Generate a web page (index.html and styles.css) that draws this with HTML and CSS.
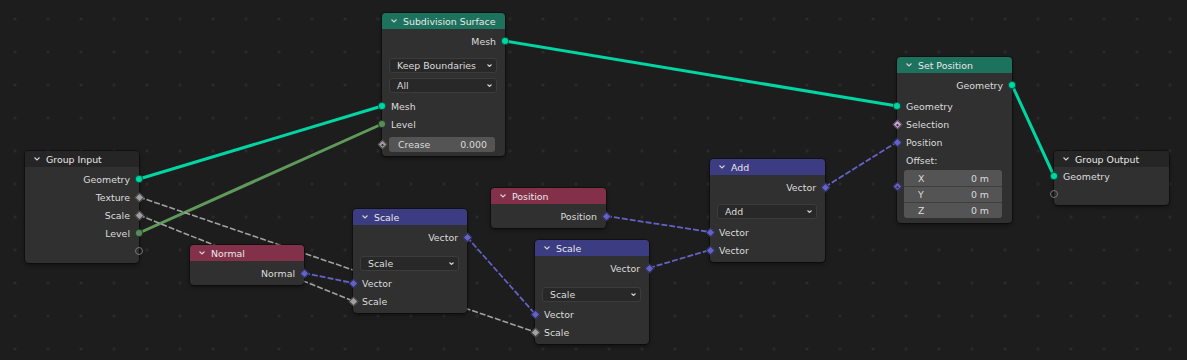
FILE: index.html
```html
<!DOCTYPE html>
<html lang="en">
  <head>
    <meta charset="UTF-8" />
    <title>Geometry Nodes</title>
    <link rel="stylesheet" href="styles.css">
  </head>
  <body>
    <div class="editor">
      <svg class="wires" width="1187" height="360">
        <g class="wire-geo">
          <line x1="505" y1="41" x2="897" y2="106" />
          <line x1="139" y1="179" x2="382" y2="106" />
          <line x1="1012" y1="85" x2="1054" y2="176" />
        </g>
        <line class="wire-int" x1="139" y1="233" x2="382" y2="124" />
        <g class="wire-float">
          <line x1="139" y1="197" x2="535" y2="332" />
          <line x1="139" y1="215" x2="353" y2="301" />
        </g>
        <g class="wire-vec">
          <line x1="304" y1="273" x2="353" y2="283" />
          <line x1="467" y1="237" x2="535" y2="314" />
          <line x1="649" y1="268" x2="710" y2="250" />
          <line x1="606" y1="216" x2="710" y2="232" />
          <line x1="825" y1="187" x2="897" y2="142" />
        </g>
      </svg>

      <!-- Subdivision Surface -->
      <div class="node n-subdiv">
        <div class="head head-geo">
          <svg class="chev" width="6" height="4"><polyline points="0.5,0.5 3,3 5.5,0.5" /></svg>
          Subdivision Surface
        </div>
        <div class="body">
          <div class="row out">Mesh<i class="sock circle geo"></i></div>
          <div class="select">Keep Boundaries
            <svg class="chev-sm" width="5" height="3"><polyline points="0.5,0.5 2.5,2.5 4.5,0.5" /></svg>
          </div>
          <div class="select second">All
            <svg class="chev-sm" width="5" height="3"><polyline points="0.5,0.5 2.5,2.5 4.5,0.5" /></svg>
          </div>
          <div class="row in sep">
            <i class="sock circle geo"></i>Mesh</div>
          <div class="row in"><i class="sock circle int"></i>Level</div>
          <div class="row in field-row">
            <i class="sock diamond float dot"></i>
            <div class="num"><span>Crease</span><span>0.000</span></div>
          </div>
        </div>
      </div>

      <!-- Group Input -->
      <div class="node n-input">
        <div class="head head-group">
          <svg class="chev" width="6" height="4"><polyline points="0.5,0.5 3,3 5.5,0.5" /></svg>
          Group Input
        </div>
        <div class="body">
          <div class="row out">Geometry<i class="sock circle geo"></i></div>
          <div class="row out">Texture<i class="sock diamond float"></i></div>
          <div class="row out">Scale<i class="sock diamond float"></i></div>
          <div class="row out">Level<i class="sock circle int"></i></div>
          <div class="row out"><i class="sock circle empty"></i></div>
        </div>
      </div>

      <!-- Normal -->
      <div class="node n-normal">
        <div class="head head-input">
          <svg class="chev" width="6" height="4"><polyline points="0.5,0.5 3,3 5.5,0.5" /></svg>
          Normal
        </div>
        <div class="body">
          <div class="row out">Normal<i class="sock diamond vec"></i></div>
        </div>
      </div>

      <!-- Scale (1) -->
      <div class="node n-scale1">
        <div class="head head-vec">
          <svg class="chev" width="6" height="4"><polyline points="0.5,0.5 3,3 5.5,0.5" /></svg>
          Scale
        </div>
        <div class="body">
          <div class="row out">Vector<i class="sock diamond vec"></i></div>
          <div class="select low">Scale
            <svg class="chev-sm" width="5" height="3"><polyline points="0.5,0.5 2.5,2.5 4.5,0.5" /></svg>
          </div>
          <div class="row in sep-sm"><i class="sock diamond vec"></i>Vector</div>
          <div class="row in"><i class="sock diamond float"></i>Scale</div>
        </div>
      </div>

      <!-- Position -->
      <div class="node n-position">
        <div class="head head-input">
          <svg class="chev" width="6" height="4"><polyline points="0.5,0.5 3,3 5.5,0.5" /></svg>
          Position
        </div>
        <div class="body">
          <div class="row out">Position<i class="sock diamond vec"></i></div>
        </div>
      </div>

      <!-- Scale (2) -->
      <div class="node n-scale2">
        <div class="head head-vec">
          <svg class="chev" width="6" height="4"><polyline points="0.5,0.5 3,3 5.5,0.5" /></svg>
          Scale
        </div>
        <div class="body">
          <div class="row out">Vector<i class="sock diamond vec"></i></div>
          <div class="select low">Scale
            <svg class="chev-sm" width="5" height="3"><polyline points="0.5,0.5 2.5,2.5 4.5,0.5" /></svg>
          </div>
          <div class="row in sep-sm"><i class="sock diamond vec"></i>Vector</div>
          <div class="row in"><i class="sock diamond float"></i>Scale</div>
        </div>
      </div>

      <!-- Add -->
      <div class="node n-add">
        <div class="head head-vec">
          <svg class="chev" width="6" height="4"><polyline points="0.5,0.5 3,3 5.5,0.5" /></svg>
          Add
        </div>
        <div class="body">
          <div class="row out">Vector<i class="sock diamond vec"></i></div>
          <div class="select">Add
            <svg class="chev-sm" width="5" height="3"><polyline points="0.5,0.5 2.5,2.5 4.5,0.5" /></svg>
          </div>
          <div class="row in sep"><i class="sock diamond vec"></i>Vector</div>
          <div class="row in"><i class="sock diamond vec"></i>Vector</div>
        </div>
      </div>

      <!-- Set Position -->
      <div class="node n-setpos">
        <div class="head head-geo">
          <svg class="chev" width="6" height="4"><polyline points="0.5,0.5 3,3 5.5,0.5" /></svg>
          Set Position
        </div>
        <div class="body body-setpos">
          <div class="row out">Geometry<i class="sock circle geo"></i></div>
          <div class="row in sep-sm"><i class="sock circle geo"></i>Geometry</div>
          <div class="row in"><i class="sock diamond bool dot"></i>Selection</div>
          <div class="row in"><i class="sock diamond vec"></i>Position</div>
          <div class="row in">Offset:</div>
          <div class="vec-row">
            <i class="sock diamond vec dot"></i>
            <div class="vec-box">
              <div><span>X</span><span>0 m</span></div>
              <div><span>Y</span><span>0 m</span></div>
              <div><span>Z</span><span>0 m</span></div>
            </div>
          </div>
        </div>
      </div>

      <!-- Group Output -->
      <div class="node n-output">
        <div class="head head-group">
          <svg class="chev" width="6" height="4"><polyline points="0.5,0.5 3,3 5.5,0.5" /></svg>
          Group Output
        </div>
        <div class="body body-output">
          <div class="row in"><i class="sock circle geo"></i>Geometry</div>
          <div class="row in"><i class="sock circle empty"></i></div>
        </div>
      </div>
    </div>
  </body>
</html>
```

FILE: styles.css
```css
body {
  margin: 0;
  background: #1d1d1d;
  font-family: "DejaVu Sans", sans-serif;
}
.editor {
  position: relative;
  width: 1187px;
  height: 360px;
  overflow: hidden;
  background-color: #1d1d1d;
  background-image: radial-gradient(circle, #2b2b2b 1.2px, transparent 1.8px);
  background-size: 33px 33px;
  background-position: -1.5px 2.5px;
}
.wires {
  position: absolute;
  left: 0;
  top: 0;
}
.wires line {
  stroke-linecap: round;
}
.wire-geo line {
  stroke: #00d6a3;
  stroke-width: 3;
}
.wire-int {
  stroke: #5f9a5b;
  stroke-width: 3;
}
.wire-float line {
  stroke: #a1a1a1;
  stroke-width: 1.6;
  stroke-dasharray: 6 2;
  stroke-linecap: butt;
}
.wire-vec line {
  stroke: #6363c7;
  stroke-width: 1.8;
  stroke-dasharray: 6 2;
  stroke-linecap: butt;
}

/* nodes */
.node {
  position: absolute;
  width: 115px;
  background: #303030;
  border-radius: 4px;
  box-shadow: 0 0 0 1px rgba(0, 0, 0, 0.35), 0 2px 4px rgba(0, 0, 0, 0.45);
  font-size: 9.4px;
  color: #dcdcdc;
}
.n-subdiv { left: 382px; top: 13px; width: 123px; }
.n-input { left: 25px; top: 151px; width: 114px; }
.n-normal { left: 190px; top: 245px; width: 114px; }
.n-scale1 { left: 353px; top: 209px; width: 114px; }
.n-position { left: 491px; top: 188px; }
.n-scale2 { left: 535px; top: 240px; width: 114px; }
.n-add { left: 710px; top: 159px; }
.n-setpos { left: 897px; top: 57px; }
.n-output { left: 1054px; top: 151px; }

.head {
  height: 16px;
  display: flex;
  align-items: center;
  gap: 6px;
  padding-left: 9px;
  border-radius: 4px 4px 0 0;
  color: #e8e8e8;
}
.head-geo { background: #1d725e; }
.head-input { background: #83314a; }
.head-vec { background: #3c3c83; }
.head-group { background: #252525; }
.chev polyline,
.chev-sm polyline {
  fill: none;
  stroke: #d4d4d4;
  stroke-width: 1.1;
}
.body {
  padding: 3px 0;
}
.body-setpos {
  padding-bottom: 5px;
}
.body-output {
  padding: 0 0 2px;
}
.row {
  position: relative;
  height: 18px;
  display: flex;
  align-items: center;
  padding: 0 9px;
}
.row.out {
  justify-content: flex-end;
}
.sep { margin-top: 4px; }
.sep-sm { margin-top: 3px; }

/* sockets */
.sock {
  position: absolute;
  top: 50%;
  width: 8px;
  height: 8px;
  margin-top: -4px;
  box-sizing: border-box;
  border: 1px solid rgba(0, 0, 0, 0.55);
}
.row.in .sock { left: -4px; }
.row.out .sock { right: -4px; }
.circle { border-radius: 50%; }
.diamond {
  width: 7px;
  height: 7px;
  margin-top: -3.5px;
  transform: rotate(45deg);
}
.row.in .diamond { left: -3.5px; }
.row.out .diamond { right: -3.5px; }
.geo { background: #00d6a3; }
.int { background: #598c5c; }
.float { background: #a1a1a1; }
.vec { background: #6363c7; }
.bool { background: #cca6d6; }
.empty {
  background: transparent;
  border: 1px solid #767676;
}
.dot::after {
  content: "";
  position: absolute;
  left: 50%;
  top: 50%;
  width: 2px;
  height: 2px;
  margin: -1px 0 0 -1px;
  background: #303030;
}

/* widgets */
.select {
  height: 15px;
  margin: 8px 8px 0 7px;
  box-sizing: border-box;
  background: #282828;
  border: 1px solid #3c3c3c;
  border-radius: 3px;
  display: flex;
  align-items: center;
  justify-content: space-between;
  padding: 0 4px 0 7px;
  color: #dcdcdc;
}
.select.low { margin-top: 10px; }
.select.second { margin-top: 5px; }
.field-row {
  margin-top: 2px;
  padding: 0 10px 0 7px;
}
.num {
  flex: 1;
  height: 15px;
  background: #545454;
  border-radius: 3px;
  display: flex;
  align-items: center;
  justify-content: space-between;
  padding: 0 8px 0 9px;
}
.vec-row {
  position: relative;
  margin-top: 1px;
  padding: 0 10px 0 7px;
}
.vec-row .sock {
  left: -3.5px;
  top: 16px;
}
.vec-box {
  border-radius: 3px;
  overflow: hidden;
  background: #3a3a3a;
}
.vec-box div {
  height: 16px;
  box-sizing: border-box;
  display: flex;
  align-items: center;
  justify-content: space-between;
  padding: 0 13px 0 14px;
  background: #545454;
  border-top: 1px solid #3e3e3e;
}
.vec-box div:first-child {
  border-top: none;
}
```
